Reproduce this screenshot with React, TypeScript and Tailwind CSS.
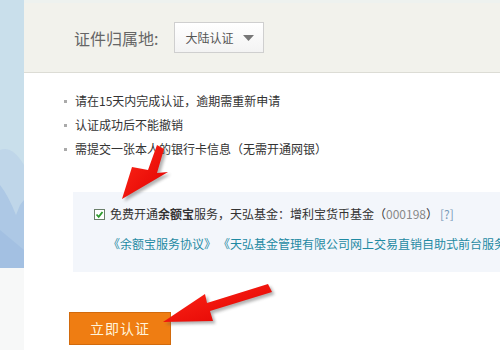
import React from "react";

const font = { fontFamily: '"SimSun","Noto Sans CJK SC","Liberation Sans",sans-serif' };

function LeftStrip() {
  return (
    <div className="w-[24px] shrink-0 flex flex-col">
      <svg width="24" height="268" viewBox="0 0 24 268" className="block">
        <rect width="24" height="268" fill="#c9dfeb" />
        <path d="M0 150 Q12 145 24 165 L24 268 L0 268 Z" fill="#bfd6e9" />
        <path d="M0 185 Q8 195 16 215 L20 205 L24 200 L24 268 L0 268 Z" fill="#adc8e5" />
        <path d="M0 230 L24 250 L24 268 L0 268 Z" fill="#a3c0e2" />
      </svg>
      <div className="flex-1 bg-[#f7f8f8]" />
    </div>
  );
}

function Arrows() {
  return (
    <svg
      width="500"
      height="350"
      viewBox="0 0 500 350"
      className="absolute left-0 top-0 pointer-events-none"
    >
      <defs>
        <filter id="sh" x="-20%" y="-20%" width="140%" height="140%">
          <feGaussianBlur stdDeviation="1.6" />
        </filter>
        <linearGradient id="rg" x1="0" y1="0" x2="1" y2="1">
          <stop offset="0" stopColor="#ff2a1a" />
          <stop offset="1" stopColor="#e00000" />
        </linearGradient>
      </defs>
      <g transform="translate(2.5,2.5)" opacity="0.45" filter="url(#sh)">
        <polygon points="122,199 132,167 148,170 157,145 164,149 157,173 168,172" fill="#555" />
        <polygon points="163,322 205,294 207,303 268,284 272,292 210,311 213,321" fill="#555" />
      </g>
      <polygon points="122,199 132,167 148,170 157,145 164,149 157,173 168,172" fill="url(#rg)" />
      <polygon points="163,322 205,294 207,303 268,284 272,292 210,311 213,321" fill="url(#rg)" />
    </svg>
  );
}

export default function App() {
  return (
    <div className="relative w-[500px] h-[350px] overflow-hidden bg-white flex" style={font}>
      <LeftStrip />
      <div className="flex-1 flex flex-col">
        <div className="h-[73px] bg-[#f2f2ec] border-t-[3px] border-t-[#eef2ef] border-b border-b-[#dcdcd5] flex items-center pl-[50px]">
          <span className="text-[16px] text-[#666] leading-none">证件归属地:</span>
          <div className="ml-[16px] w-[90px] h-[31px] border border-[#cfcfcf] bg-gradient-to-b from-white to-[#f3f3f3] flex items-center pl-[10px]">
            <span className="text-[12px] text-[#555] leading-none">大陆认证</span>
            <svg width="11" height="6" viewBox="0 0 11 6" className="ml-[10px]">
              <polygon points="0,0 11,0 5.5,6" fill="#777" />
            </svg>
          </div>
        </div>
        <div className="pt-[16px] pl-[40px] flex flex-col">
          {[
            "请在15天内完成认证，逾期需重新申请",
            "认证成功后不能撤销",
            "需提交一张本人的银行卡信息（无需开通网银）",
          ].map((t) => (
            <div key={t} className="h-[24px] flex items-center text-[12px] text-[#333]">
              <span className="w-[3px] h-[3px] bg-[#aaa] mr-[8px]" />
              <span>{t}</span>
            </div>
          ))}
        </div>
        <div className="mt-[31px] ml-[49px] h-[80px] bg-[#f3f6fb] flex flex-col pl-[21px] pt-[15px]">
          <div className="flex items-center h-[14px] text-[12px] text-[#333] whitespace-nowrap">
            <span className="w-[11px] h-[11px] border border-[#6a7f6a] bg-white flex items-center justify-center mr-[5px]">
              <svg width="9" height="9" viewBox="0 0 9 9">
                <path d="M1.5 4.5 L3.7 6.8 L7.5 2" stroke="#2c9a2c" strokeWidth="1.8" fill="none" />
              </svg>
            </span>
            <span>免费开通</span>
            <span className="font-bold">余额宝</span>
            <span>服务，天弘基金：增利宝货币基金（</span>
            <span className="text-[#888]">000198</span>
            <span>）</span>
            <span className="text-[#7a9ab8] ml-[2px]">[?]</span>
          </div>
          <div className="mt-[14px] ml-[14px] flex text-[12px] text-[#1f8aa3] whitespace-nowrap">
            <span>《余额宝服务协议》</span>
            <span className="ml-[2px]">《天弘基金管理有限公司网上交易直销自助式前台服务协议》</span>
          </div>
        </div>
        <div className="mt-[40px] ml-[45px]">
          <div className="w-[102px] h-[33px] bg-[#ef7d12] border border-[#d26a0c] flex items-center justify-center">
            <span className="text-[14px] text-[#fff4dc] tracking-[1px]">立即认证</span>
          </div>
        </div>
      </div>
      <Arrows />
    </div>
  );
}
